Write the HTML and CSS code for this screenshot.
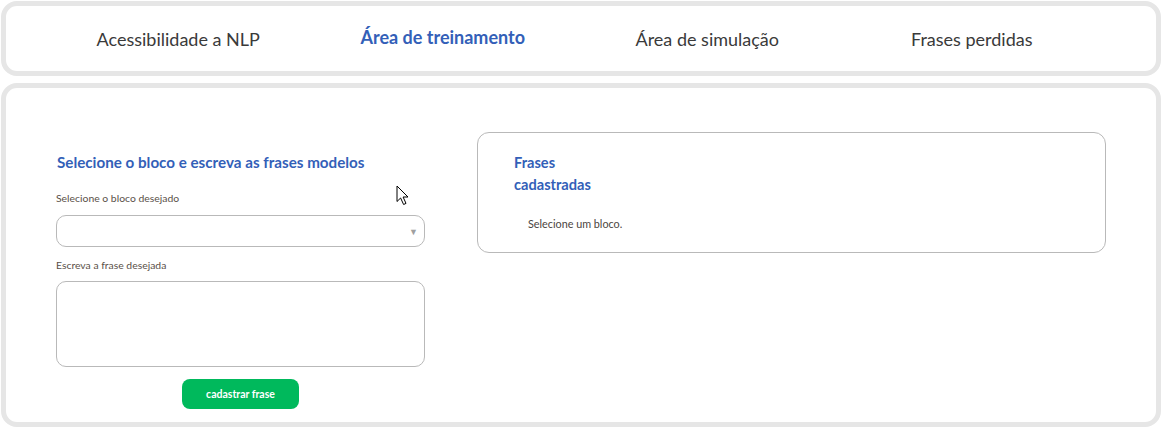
FILE: index.html
```html
<!DOCTYPE html>
<html lang="pt">
<head>
<meta charset="utf-8">
<title>Área de treinamento</title>
<link rel="stylesheet" href="styles.css">
</head>
<body>
<nav class="card nav">
  <a class="nav-item">Acessibilidade a NLP</a>
  <a class="nav-item active">Área de treinamento</a>
  <a class="nav-item">Área de simulação</a>
  <a class="nav-item">Frases perdidas</a>
</nav>
<main class="card main">
  <section class="form-col">
    <h2 class="title">Selecione o bloco e escreva as frases modelos</h2>
    <label class="label">Selecione o bloco desejado</label>
    <div class="select"><span class="arrow">▼</span></div>
    <label class="label">Escreva a frase desejada</label>
    <div class="textarea"></div>
    <div class="btn-row"><button class="btn">cadastrar frase</button></div>
  </section>
  <section class="list-box">
    <h2 class="list-title">Frases cadastradas</h2>
    <p class="empty">Selecione um bloco.</p>
  </section>
</main>
<svg class="cursor" width="14" height="21" viewBox="0 0 14 21"><path d="M1 1 L1 16.5 L4.6 13 L7.6 19.5 L10 18.4 L7.1 12 L12 12 Z" fill="#fff" stroke="#000" stroke-width="1" stroke-linejoin="round"/></svg>
</body>
</html>
```

FILE: styles.css
```css
* { box-sizing: border-box; }
html, body { margin: 0; background: #fff; }
body {
  padding: 1px 2px 0 1px;
  font-family: Lato, "Noto Sans", sans-serif;
  position: relative;
  width: 1163px;
  height: 430px;
  overflow: hidden;
}
.card {
  background: #fff;
  border: 5px solid #e6e6e6;
  border-radius: 16px;
}
.nav {
  height: 75px;
  display: grid;
  grid-template-columns: repeat(4, 1fr);
  align-items: center;
  padding: 0 52px 0 40px;
}
.nav-item {
  text-align: center;
  font-size: 18px;
  color: #3a3a3a;
  white-space: nowrap;
}
.nav-item.active {
  color: #335fb8;
  font-weight: 700;
  position: relative;
  top: -2px;
}
.main {
  margin-top: 7px;
  height: 344px;
  display: flex;
  gap: 52px;
  padding: 44px 50px 0 50px;
  align-items: flex-start;
}
.form-col {
  width: 369px;
  flex: none;
  display: flex;
  flex-direction: column;
}
.title {
  margin: 20px 0 19px 1px;
  font-size: 15.2px;
  line-height: 20px;
  font-weight: 700;
  color: #335fb8;
  white-space: nowrap;
}
.label {
  font-size: 10.4px;
  line-height: 14px;
  color: #5a5048;
  margin-bottom: 10px;
}
.select {
  height: 32px;
  border: 1px solid #b9b9b9;
  border-radius: 10px;
  display: flex;
  justify-content: flex-end;
  align-items: center;
  padding-right: 6px;
  margin-bottom: 11px;
}
.arrow {
  font-size: 9px;
  color: #a0a0a0;
}
.textarea {
  height: 86px;
  border: 1px solid #b9b9b9;
  border-radius: 10px;
  margin-top: -1px;
}
.btn-row {
  display: flex;
  justify-content: center;
  margin-top: 12px;
}
.btn {
  width: 117px;
  height: 30px;
  border: none;
  border-radius: 8px;
  background: #00b95c;
  color: #fff;
  font-family: inherit;
  font-weight: 700;
  font-size: 10.5px;
}
.list-box {
  flex: 1;
  height: 121px;
  border: 1px solid #b9b9b9;
  border-radius: 12px;
  padding: 19px 36px 0 36px;
}
.list-title {
  margin: 0;
  width: 90px;
  font-size: 14.6px;
  line-height: 22px;
  font-weight: 700;
  color: #335fb8;
}
.empty {
  margin: 21px 0 0 14px;
  font-size: 10.8px;
  line-height: 14px;
  color: #4a4440;
}
.cursor {
  position: absolute;
  left: 396px;
  top: 185px;
}
```
